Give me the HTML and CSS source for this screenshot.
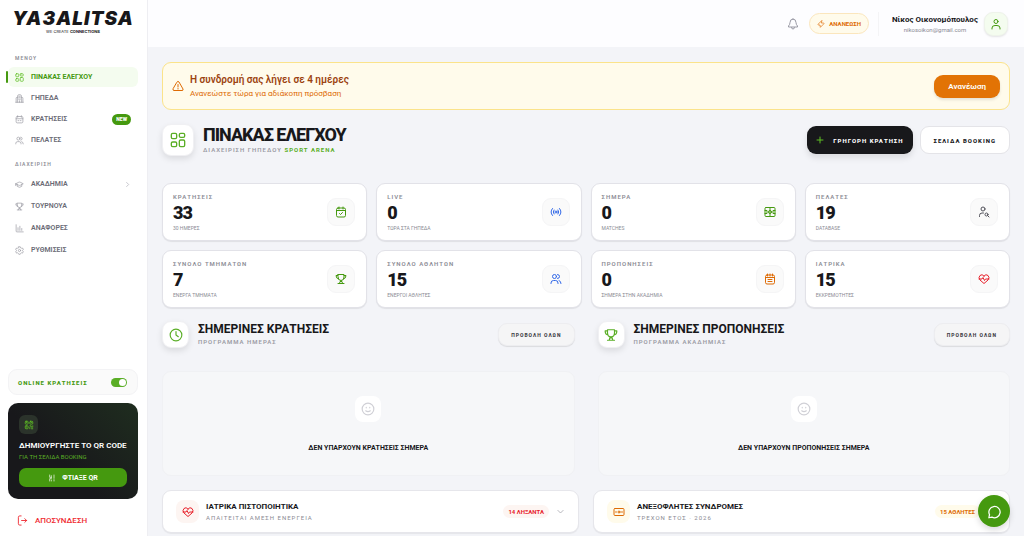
FILE: index.html
```html
<!DOCTYPE html>
<html lang="el">
<head>
  <meta charset="UTF-8">
  <meta name="viewport" content="width=device-width, initial-scale=1.0">
  <title>Πίνακας Ελέγχου</title>
  <link rel="stylesheet" href="styles.css">
</head>
<body>
  <svg class="sprite" aria-hidden="true">
    <symbol id="grid" viewBox="0 0 24 24"><rect x="2" y="2" width="8" height="8" rx="2"/><rect x="14" y="2" width="8" height="6" rx="2"/><rect x="2" y="15" width="8" height="7" rx="2"/><rect x="14" y="12" width="8" height="10" rx="2"/></symbol>
    <symbol id="building" viewBox="0 0 24 24"><path d="M2 22h20M7 22V5q0-3 3-3h4q3 0 3 3v17M7 9H5q-2 0-2 2v11M17 9h2q2 0 2 2v11M10 6h4M10 10h4M10 14h4M12 18v4"/></symbol>
    <symbol id="calendar" viewBox="0 0 24 24"><rect x="3" y="4" width="18" height="17" rx="3"/><path d="M7 2v4M17 2v4M3 10h18M8 15h2M14 15h2"/></symbol>
    <symbol id="calendar-check" viewBox="0 0 24 24"><rect x="3" y="4" width="18" height="18" rx="3"/><path d="M8 2v4M16 2v4M3 9h18M9 15l2 2 4-4"/></symbol>
    <symbol id="calendar-lines" viewBox="0 0 24 24"><rect x="3" y="4" width="18" height="18" rx="3"/><path d="M7 2v4M12 2v4M17 2v4M3 9h18M8 13h8M8 17h8"/></symbol>
    <symbol id="users" viewBox="0 0 24 24"><circle cx="9" cy="7" r="4"/><path d="M2 21v-1q0-5 5-5h4q5 0 5 5v1M15 3a4 4 0 0 1 0 8M18 15q4 1 4 6"/></symbol>
    <symbol id="cap" viewBox="0 0 24 24"><path d="M2 10l8-4q2-1 4 0l8 4-8 4q-2 1-4 0zM2 10v5M6 12v5q6 5 12 0v-5"/></symbol>
    <symbol id="cup" viewBox="0 0 24 24"><path d="M6 3h12v5q0 7-6 7t-6-7zM6 5H2q0 6 5 7M18 5h4q0 6-5 7M12 15v2M9 21l1-4h4l1 4M6 21h12"/></symbol>
    <symbol id="chart" viewBox="0 0 24 24"><path d="M3 2v17q0 2 2 2h17M8 10v7M13 6v11M18 12v5"/></symbol>
    <symbol id="gear" viewBox="0 0 24 24"><path d="M10 2h4l1 3 3 1 3 0 1 4-2 2 2 3-2 4-3-1-2 2-1 2h-4l-1-2-2-2-3 1-2-4 2-3-2-2 1-4 3 0 3-1z"/><circle cx="12" cy="12" r="3"/></symbol>
    <symbol id="chevron-right" viewBox="0 0 24 24"><path d="M9 5l7 7-7 7"/></symbol>
    <symbol id="chevron-down" viewBox="0 0 24 24"><path d="M5 9l7 7 7-7"/></symbol>
    <symbol id="qr" viewBox="0 0 24 24"><rect x="3" y="3" width="7" height="7" rx="2"/><rect x="14" y="3" width="7" height="7" rx="2"/><rect x="3" y="14" width="7" height="7" rx="2"/><path d="M14 14h3v3h4M21 14v1M14 18v3M18 21h3M6 6h1M17 6h1M6 17h1"/></symbol>
    <symbol id="scan" viewBox="0 0 24 24"><path d="M5 3v7h5V5M10 10v4H5v7M10 21v-3M18 3v10M18 17v4"/></symbol>
    <symbol id="logout" viewBox="0 0 24 24"><path d="M9 2H6Q3 2 3 5v14q0 3 3 3h3M10 12h11M17 8l4 4-4 4"/></symbol>
    <symbol id="bell" viewBox="0 0 24 24"><path d="M12 2q-6 0-6 7 0 4-3 7v2h18v-2q-3-3-3-7 0-7-6-7zM9 19q0 3 3 3t3-3"/></symbol>
    <symbol id="bolt" viewBox="0 0 24 24"><path d="M14 2L3 13q0 2 2 2h4l1 7 11-11q0-2-2-2h-5z"/></symbol>
    <symbol id="user" viewBox="0 0 24 24"><circle cx="12" cy="7" r="4"/><path d="M4 22v-2q0-5 6-5h4q6 0 6 5v2"/></symbol>
    <symbol id="user-search" viewBox="0 0 24 24"><circle cx="10" cy="6" r="4"/><path d="M3 21v-2q0-5 5-5h3M19 19l3 3"/><circle cx="17" cy="17" r="3"/></symbol>
    <symbol id="warning" viewBox="0 0 24 24"><path d="M10 4q2-3 4 0l8 14q1 3-2 3H4q-3 0-2-3zM12 9v5M12 17v1"/></symbol>
    <symbol id="plus" viewBox="0 0 24 24"><path d="M12 3v18M3 12h18"/></symbol>
    <symbol id="live" viewBox="0 0 24 24"><circle cx="12" cy="12" r="2"/><path d="M8 8q-3 4 0 8M16 8q3 4 0 8M5 5q-6 7 0 14M19 5q6 7 0 14"/></symbol>
    <symbol id="field" viewBox="0 0 24 24"><rect x="2" y="3" width="20" height="18" rx="2"/><path d="M12 3v18M2 9h4v6H2M22 9h-4v6h4"/><circle cx="12" cy="12" r="3"/></symbol>
    <symbol id="heart" viewBox="0 0 24 24"><path d="M12 6Q8 1 4 5t0 9l8 7 8-7q4-5 0-9t-8 1zM2 12h6l2-3 3 6 2-3h7"/></symbol>
    <symbol id="clock" viewBox="0 0 24 24"><circle cx="12" cy="12" r="10"/><path d="M12 6v6l4 3"/></symbol>
    <symbol id="smile" viewBox="0 0 24 24"><circle cx="12" cy="12" r="10"/><path d="M8 15q4 3 8 0M9 9v1M15 9v1"/></symbol>
    <symbol id="cash" viewBox="0 0 24 24"><rect x="2" y="5" width="20" height="14" rx="2"/><circle cx="12" cy="12" r="2"/><path d="M6 11v2M18 11v2"/></symbol>
    <symbol id="chat" viewBox="0 0 24 24"><path d="M4 17a9 9 0 1 1 4 4l-5 1z"/></symbol>
  </svg>

  <div class="app">
    <aside class="sidebar">
      <div class="logo">
        <div class="logo-name">YA3ALITSA</div>
        <div class="logo-tag">WE CREATE <b>CONNECTIONS</b></div>
      </div>

      <nav class="menu">
        <h2>ΜΕΝΟΥ</h2>
        <a class="active" href="#"><svg><use href="#grid"/></svg>ΠΙΝΑΚΑΣ ΕΛΕΓΧΟΥ</a>
        <a href="#"><svg><use href="#building"/></svg>ΓΗΠΕΔΑ</a>
        <a href="#"><svg><use href="#calendar"/></svg>ΚΡΑΤΗΣΕΙΣ <span class="new">NEW</span></a>
        <a href="#"><svg><use href="#users"/></svg>ΠΕΛΑΤΕΣ</a>
      </nav>
      <nav class="menu manage">
        <h2>ΔΙΑΧΕΙΡΙΣΗ</h2>
        <a href="#"><svg><use href="#cap"/></svg>ΑΚΑΔΗΜΙΑ <svg class="arrow"><use href="#chevron-right"/></svg></a>
        <a href="#"><svg><use href="#cup"/></svg>ΤΟΥΡΝΟΥΑ</a>
        <a href="#"><svg><use href="#chart"/></svg>ΑΝΑΦΟΡΕΣ</a>
        <a href="#"><svg><use href="#gear"/></svg>ΡΥΘΜΙΣΕΙΣ</a>
      </nav>

      <div class="sidebar-bottom">
        <label class="online">ONLINE ΚΡΑΤΗΣΕΙΣ <input type="checkbox" checked></label>
        <div class="qr-card">
          <span class="qr-icon"><svg><use href="#qr"/></svg></span>
          <h3>ΔΗΜΙΟΥΡΓΗΣΤΕ ΤΟ QR CODE</h3>
          <p>ΓΙΑ ΤΗ ΣΕΛΙΔΑ BOOKING</p>
          <button type="button"><svg><use href="#scan"/></svg>ΦΤΙΑΞΕ QR</button>
        </div>
        <a class="logout" href="#"><svg><use href="#logout"/></svg>ΑΠΟΣΥΝΔΕΣΗ</a>
      </div>
    </aside>

    <div class="content">
      <header class="topbar">
        <button class="bell" type="button" aria-label="Ειδοποιήσεις"><svg><use href="#bell"/></svg></button>
        <button class="renew" type="button"><svg><use href="#bolt"/></svg>ΑΝΑΝΕΩΣΗ</button>
        <div class="profile">
          <div class="who">
            <strong>Νίκος Οικονομόπουλος</strong>
            <span>nikosoikon@gmail.com</span>
          </div>
          <a class="avatar" href="#" aria-label="Προφίλ"><svg><use href="#user"/></svg></a>
        </div>
      </header>

      <main>
        <section class="banner">
          <svg><use href="#warning"/></svg>
          <div class="banner-text">
            <h2>Η συνδρομή σας λήγει σε 4 ημέρες</h2>
            <p>Ανανεώστε τώρα για αδιάκοπη πρόσβαση</p>
          </div>
          <button type="button">Ανανέωση</button>
        </section>

        <section class="title">
          <span class="title-icon"><svg><use href="#grid"/></svg></span>
          <div class="title-text">
            <h1>ΠΙΝΑΚΑΣ ΕΛΕΓΧΟΥ</h1>
            <p>ΔΙΑΧΕΙΡΙΣΗ ΓΗΠΕΔΟΥ <b>SPORT ARENA</b></p>
          </div>
          <button class="btn dark" type="button"><svg><use href="#plus"/></svg>ΓΡΗΓΟΡΗ ΚΡΑΤΗΣΗ</button>
          <button class="btn light" type="button">ΣΕΛΙΔΑ BOOKING</button>
        </section>

        <section class="stats">
          <article class="stat">
            <div><h3>ΚΡΑΤΗΣΕΙΣ</h3><strong>33</strong><p>30 ΗΜΕΡΕΣ</p></div>
            <span class="stat-icon green"><svg><use href="#calendar-check"/></svg></span>
          </article>
          <article class="stat">
            <div><h3>LIVE</h3><strong>0</strong><p>ΤΩΡΑ ΣΤΑ ΓΗΠΕΔΑ</p></div>
            <span class="stat-icon blue"><svg><use href="#live"/></svg></span>
          </article>
          <article class="stat">
            <div><h3>ΣΗΜΕΡΑ</h3><strong>0</strong><p>MATCHES</p></div>
            <span class="stat-icon green"><svg><use href="#field"/></svg></span>
          </article>
          <article class="stat">
            <div><h3>ΠΕΛΑΤΕΣ</h3><strong>19</strong><p>DATABASE</p></div>
            <span class="stat-icon gray"><svg><use href="#user-search"/></svg></span>
          </article>
          <article class="stat">
            <div><h3>ΣΥΝΟΛΟ ΤΜΗΜΑΤΩΝ</h3><strong>7</strong><p>ΕΝΕΡΓΑ ΤΜΗΜΑΤΑ</p></div>
            <span class="stat-icon green"><svg><use href="#cup"/></svg></span>
          </article>
          <article class="stat">
            <div><h3>ΣΥΝΟΛΟ ΑΘΛΗΤΩΝ</h3><strong>15</strong><p>ΕΝΕΡΓΟΙ ΑΘΛΗΤΕΣ</p></div>
            <span class="stat-icon blue"><svg><use href="#users"/></svg></span>
          </article>
          <article class="stat">
            <div><h3>ΠΡΟΠΟΝΗΣΕΙΣ</h3><strong>0</strong><p>ΣΗΜΕΡΑ ΣΤΗΝ ΑΚΑΔΗΜΙΑ</p></div>
            <span class="stat-icon orange"><svg><use href="#calendar-lines"/></svg></span>
          </article>
          <article class="stat">
            <div><h3>ΙΑΤΡΙΚΑ</h3><strong>15</strong><p>ΕΚΚΡΕΜΟΤΗΤΕΣ</p></div>
            <span class="stat-icon red"><svg><use href="#heart"/></svg></span>
          </article>
        </section>

        <div class="today">
          <section>
            <div class="today-head">
              <span class="today-icon"><svg><use href="#clock"/></svg></span>
              <div class="today-text">
                <h2>ΣΗΜΕΡΙΝΕΣ ΚΡΑΤΗΣΕΙΣ</h2>
                <p>ΠΡΟΓΡΑΜΜΑ ΗΜΕΡΑΣ</p>
              </div>
              <button class="all" type="button">ΠΡΟΒΟΛΗ ΟΛΩΝ</button>
            </div>
            <div class="empty">
              <span><svg><use href="#smile"/></svg></span>
              <p>ΔΕΝ ΥΠΑΡΧΟΥΝ ΚΡΑΤΗΣΕΙΣ ΣΗΜΕΡΑ</p>
            </div>
          </section>
          <section>
            <div class="today-head">
              <span class="today-icon"><svg><use href="#cup"/></svg></span>
              <div class="today-text">
                <h2>ΣΗΜΕΡΙΝΕΣ ΠΡΟΠΟΝΗΣΕΙΣ</h2>
                <p>ΠΡΟΓΡΑΜΜΑ ΑΚΑΔΗΜΙΑΣ</p>
              </div>
              <button class="all" type="button">ΠΡΟΒΟΛΗ ΟΛΩΝ</button>
            </div>
            <div class="empty">
              <span><svg><use href="#smile"/></svg></span>
              <p>ΔΕΝ ΥΠΑΡΧΟΥΝ ΠΡΟΠΟΝΗΣΕΙΣ ΣΗΜΕΡΑ</p>
            </div>
          </section>
        </div>

        <div class="alerts">
          <button class="alert" type="button">
            <span class="alert-icon red"><svg><use href="#heart"/></svg></span>
            <span class="alert-text"><b>ΙΑΤΡΙΚΑ ΠΙΣΤΟΠΟΙΗΤΙΚΑ</b><small>ΑΠΑΙΤΕΙΤΑΙ ΑΜΕΣΗ ΕΝΕΡΓΕΙΑ</small></span>
            <span class="badge red">14 ΛΗΞΑΝΤΑ</span>
            <svg class="arrow"><use href="#chevron-down"/></svg>
          </button>
          <button class="alert" type="button">
            <span class="alert-icon orange"><svg><use href="#cash"/></svg></span>
            <span class="alert-text"><b>ΑΝΕΞΟΦΛΗΤΕΣ ΣΥΝΔΡΟΜΕΣ</b><small>ΤΡΕΧΟΝ ΕΤΟΣ · 2026</small></span>
            <span class="badge orange">15 ΑΘΛΗΤΕΣ</span>
            <svg class="arrow"><use href="#chevron-down"/></svg>
          </button>
        </div>
      </main>
    </div>
  </div>

  <button class="chat" type="button" aria-label="Συνομιλία"><svg><use href="#chat"/></svg></button>
</body>
</html>
```
FILE: styles.css
```css
* {
  box-sizing: border-box;
}
body {
  margin: 0;
  font-family: Roboto, "Noto Sans", sans-serif;
  background-color: #f3f4f8;
  color: #18181b;
}
h1, h2, h3, p {
  margin: 0;
}
a {
  text-decoration: none;
}
button {
  font-family: inherit;
  border: none;
  cursor: pointer;
}
svg {
  display: block;
  flex: none;
  width: 12px;
  height: 12px;
  fill: none;
  stroke: currentColor;
  stroke-width: 2;
  stroke-linecap: round;
  stroke-linejoin: round;
}
.sprite {
  display: none;
}
.app {
  display: flex;
  min-height: 100vh;
}

/* sidebar */
.sidebar {
  width: 148px;
  flex: none;
  display: flex;
  flex-direction: column;
  padding: 9px 9px 8px 8px;
  background-color: #fff;
  border-right: 1px solid #eeeef2;
}
.logo {
  height: 44px;
  text-align: center;
  font-family: Inter, sans-serif;
}
.logo-name {
  font-size: 19px;
  line-height: 20px;
  font-weight: 900;
  font-style: italic;
  letter-spacing: 1px;
}
.logo-tag {
  font-size: 4px;
  line-height: 5px;
}
.menu {
  display: flex;
  flex-direction: column;
  gap: 1px;
}
.menu h2 {
  padding: 0 7px;
  margin-bottom: 3px;
  font-size: 5px;
  line-height: 10px;
  font-weight: 600;
  letter-spacing: 1px;
  color: #8b8b94;
}
.menu a {
  display: flex;
  align-items: center;
  height: 20px;
  padding: 0 7px;
  gap: 7px;
  border-radius: 6px;
  font-size: 7px;
  font-weight: 600;
  color: #6b6b76;
}
.menu a svg {
  width: 9px;
  height: 9px;
  color: #a1a1aa;
}
.menu .active {
  position: relative;
  background-color: #f4fcef;
  color: #45990f;
  font-weight: 700;
}
.menu .active::before {
  content: "";
  position: absolute;
  left: -2px;
  top: 4px;
  width: 2px;
  height: 12px;
  border-radius: 1px;
  background-color: #45990f;
}
.menu .active svg {
  color: #5fbf24;
}
.new {
  margin-left: auto;
  padding: 0 4px;
  border-radius: 6px;
  background-color: #45990f;
  color: #fff;
  font-size: 5px;
  line-height: 11px;
  font-weight: 900;
}
.manage {
  margin-top: 9px;
  gap: 2px;
}
.menu .arrow {
  margin-left: auto;
  width: 7px;
  height: 7px;
}
.sidebar-bottom {
  margin-top: auto;
}
.online {
  display: flex;
  align-items: center;
  justify-content: space-between;
  height: 26px;
  padding: 0 10px 0 9px;
  border: 1px solid #f3f3f5;
  border-radius: 9px;
  background-color: #fafafa;
  color: #45990f;
  font-size: 6px;
  font-weight: 800;
  letter-spacing: 1px;
}
.online input {
  appearance: none;
  display: flex;
  justify-content: flex-end;
  width: 16px;
  height: 9px;
  margin: 0;
  padding: 1px;
  border-radius: 5px;
  background-color: #5aae26;
}
.online input::before {
  content: "";
  width: 7px;
  height: 7px;
  border-radius: 50%;
  background-color: #fff;
}
.online input:not(:checked) {
  justify-content: flex-start;
  background-color: #d4d4d8;
}
.qr-card {
  margin-top: 8px;
  padding: 12px 11px;
  border-radius: 10px;
  background: linear-gradient(225deg, #1f2d1f, #18181b 60%);
}
.qr-icon {
  display: grid;
  place-items: center;
  width: 19px;
  height: 19px;
  border-radius: 6px;
  background-color: #2b332b;
  color: #5fbf24;
}
.qr-icon svg {
  width: 10px;
  height: 10px;
}
.qr-card h3 {
  margin-top: 6px;
  color: #fff;
  font-size: 8px;
  line-height: 11px;
  font-weight: 600;
  white-space: nowrap;
}
.qr-card p {
  color: #5aae26;
  font-size: 6px;
  line-height: 11px;
}
.qr-card button {
  display: flex;
  align-items: center;
  justify-content: center;
  gap: 6px;
  width: 100%;
  height: 19px;
  margin-top: 6px;
  border-radius: 7px;
  background-color: #45990f;
  color: #fff;
  font-size: 7px;
  font-weight: 700;
}
.qr-card button svg {
  width: 8px;
  height: 8px;
}
.logout {
  display: flex;
  align-items: center;
  gap: 7px;
  height: 16px;
  margin-top: 13px;
  padding-left: 9px;
  color: #ef2b33;
  font-size: 8px;
  font-weight: 500;
}
.logout svg {
  width: 11px;
  height: 11px;
}

/* top bar */
.content {
  flex: 1;
  min-width: 0;
}
.topbar {
  display: flex;
  align-items: center;
  justify-content: flex-end;
  height: 47px;
  padding: 0 16px;
  background-color: #fdfdff;
}
.bell {
  padding: 0;
  background: none;
  color: #9a9aa5;
}
.renew {
  display: flex;
  align-items: center;
  gap: 4px;
  height: 21px;
  margin: 0 9px 0 10px;
  padding: 0 7px;
  border: 1px solid #fbe6bd;
  border-radius: 11px;
  background-color: #fffbeb;
  color: #de6b05;
  font-size: 6px;
  font-weight: 700;
}
.renew svg {
  width: 8px;
  height: 8px;
}
.profile {
  display: flex;
  align-items: center;
  gap: 6px;
  padding-left: 13px;
  border-left: 1px solid #f4f4f6;
}
.who {
  display: flex;
  flex-direction: column;
  align-items: center;
}
.who strong {
  font-size: 8px;
  line-height: 11px;
  font-weight: 700;
}
.who span {
  font-size: 6px;
  line-height: 9px;
  color: #8b8b94;
}
.avatar {
  display: grid;
  place-items: center;
  width: 24px;
  height: 24px;
  border-radius: 9px;
  border: 1px solid #eef3ea;
  background-color: #f4fcef;
  color: #45990f;
  box-shadow: 0 1px 2px rgba(0,0,0,0.1);
}

/* page */
main {
  padding: 15px 14px 3px;
}
.banner {
  display: flex;
  align-items: center;
  gap: 6px;
  height: 48px;
  padding: 0 9px;
  border: 1px solid #fbe38a;
  border-radius: 9px;
  background-color: #fffbeb;
  color: #de6b05;
}
.banner-text {
  flex: 1;
  padding-top: 2px;
}
.banner h2 {
  font-size: 10px;
  line-height: 14px;
  font-weight: 600;
  color: #9c4310;
}
.banner p {
  font-size: 8px;
  line-height: 14px;
}
.banner button {
  height: 23px;
  padding: 0 14px;
  border-radius: 9px;
  background-color: #e27305;
  color: #fff;
  font-size: 8px;
  font-weight: 600;
  box-shadow: 0 2px 3px rgba(0,0,0,0.1);
}
.title {
  display: flex;
  align-items: center;
  gap: 7px;
  margin-top: 14px;
}
.title-icon, .today-icon {
  display: grid;
  place-items: center;
  width: 32px;
  height: 32px;
  border: 1px solid #f0f0f3;
  border-radius: 9px;
  background-color: #fff;
  color: #5aae26;
  box-shadow: 0 3px 6px rgba(0,0,0,0.1);
}
.title-icon svg {
  width: 16px;
  height: 16px;
}
.title-text {
  flex: 1;
  padding: 2px 0 0 2px;
}
h1 {
  font-size: 18px;
  line-height: 18px;
  font-weight: 800;
  letter-spacing: -1px;
}
.title-text p, .today-text p {
  font-size: 6px;
  line-height: 12px;
  font-weight: 600;
  letter-spacing: 1px;
  color: #9a9aa3;
}
.title-text b {
  font-weight: 700;
  color: #5aae26;
}
.btn {
  display: flex;
  align-items: center;
  gap: 9px;
  height: 28px;
  padding: 0 9px;
  border-radius: 9px;
  font-size: 6px;
  font-weight: 800;
  letter-spacing: 1px;
}
.btn svg {
  width: 8px;
  height: 8px;
  stroke-width: 3;
  color: #5fbf24;
}
.dark {
  background-color: #18181b;
  color: #fff;
  box-shadow: 0 4px 6px rgba(0,0,0,0.1);
}
.light {
  padding: 0 13px;
  border: 1px solid #e4e4e8;
  background-color: #fff;
  color: #18181b;
}
.stats {
  display: grid;
  grid-template-columns: repeat(4, 1fr);
  gap: 9px;
  margin-top: 27px;
}
.stat {
  display: flex;
  align-items: center;
  justify-content: space-between;
  height: 58px;
  padding: 0 11px 0 10px;
  border: 1px solid #e2e2e8;
  border-radius: 9px;
  background-color: #fff;
  box-shadow: 0 1px 1px rgba(0,0,0,0.08);
}
.stat h3 {
  padding-top: 1px;
  font-size: 6px;
  line-height: 8px;
  font-weight: 600;
  letter-spacing: 1px;
  color: #8b8b94;
}
.stat strong {
  display: block;
  font-size: 18px;
  line-height: 23px;
  font-weight: 900;
  letter-spacing: -1px;
}
.stat p {
  font-size: 5px;
  line-height: 9px;
  color: #8b8b94;
}
.stat-icon {
  display: grid;
  place-items: center;
  width: 28px;
  height: 28px;
  border: 1px solid #f5f5f6;
  border-radius: 9px;
  background-color: #fafafa;
}
.green {
  color: #45990f;
}
.blue {
  color: #3168e8;
}
.gray {
  color: #52525b;
}
.orange {
  color: #de6b05;
}
.red {
  color: #e8222c;
}
.today {
  display: grid;
  grid-template-columns: 1fr 1fr;
  gap: 23px;
  margin-top: 13px;
}
.today-head {
  display: flex;
  align-items: center;
  gap: 9px;
}
.today-icon {
  width: 27px;
  height: 27px;
}
.today-icon svg {
  width: 14px;
  height: 14px;
}
.today-text {
  flex: 1;
}
.today-text h2 {
  padding-top: 1px;
  font-size: 12px;
  line-height: 14px;
  font-weight: 700;
}
.all {
  height: 23px;
  padding: 0 12px;
  border: 1px solid #ededf0;
  border-radius: 9px;
  background-color: #f5f5f6;
  color: #3f3f46;
  font-size: 5px;
  font-weight: 800;
  letter-spacing: 1px;
  box-shadow: 0 1px 1px rgba(0,0,0,0.1);
}
.empty {
  display: flex;
  flex-direction: column;
  align-items: center;
  height: 105px;
  margin-top: 23px;
  padding-top: 24px;
  border: 1px solid #f0f1f4;
  border-radius: 9px;
  background-color: #f6f7f9;
}
.empty span {
  display: grid;
  place-items: center;
  width: 26px;
  height: 26px;
  border-radius: 8px;
  background-color: #fff;
  color: #d0d0d6;
}
.empty svg {
  width: 14px;
  height: 14px;
}
.empty p {
  margin-top: 21px;
  font-size: 7px;
  line-height: 11px;
  font-weight: 700;
}
.alerts {
  display: grid;
  grid-template-columns: 1fr 1fr;
  gap: 14px;
  margin-top: 14px;
}
.alert {
  display: flex;
  align-items: center;
  gap: 7px;
  height: 43px;
  padding: 0 13px;
  border: 1px solid #e6e6eb;
  border-radius: 9px;
  background-color: #fff;
  color: #18181b;
  text-align: left;
  box-shadow: 0 1px 1px rgba(0,0,0,0.06);
}
.alert-icon {
  display: grid;
  place-items: center;
  width: 23px;
  height: 23px;
  border-radius: 8px;
  background-color: #fdf5f2;
}
.alert-text {
  flex: 1;
}
.alert b {
  display: block;
  font-size: 8px;
  line-height: 12px;
}
.alert small {
  display: block;
  font-size: 6px;
  line-height: 10px;
  letter-spacing: 1px;
  color: #8b8b94;
}
.badge {
  padding: 0 5px;
  border-radius: 7px;
  background-color: #fdf5f2;
  font-size: 6px;
  line-height: 13px;
  font-weight: 700;
}
.alert-icon.orange, .badge.orange {
  background-color: #fffbeb;
}
.alert .arrow {
  width: 9px;
  height: 9px;
  color: #a1a1aa;
}

/* floating chat button */
.chat {
  position: fixed;
  right: 14px;
  bottom: 9px;
  display: grid;
  place-items: center;
  width: 32px;
  height: 32px;
  padding: 0;
  border-radius: 50%;
  background-color: #45990f;
  color: #fff;
  box-shadow: 0 3px 6px rgba(0,0,0,0.15);
}
.chat svg {
  width: 15px;
  height: 15px;
}
```
